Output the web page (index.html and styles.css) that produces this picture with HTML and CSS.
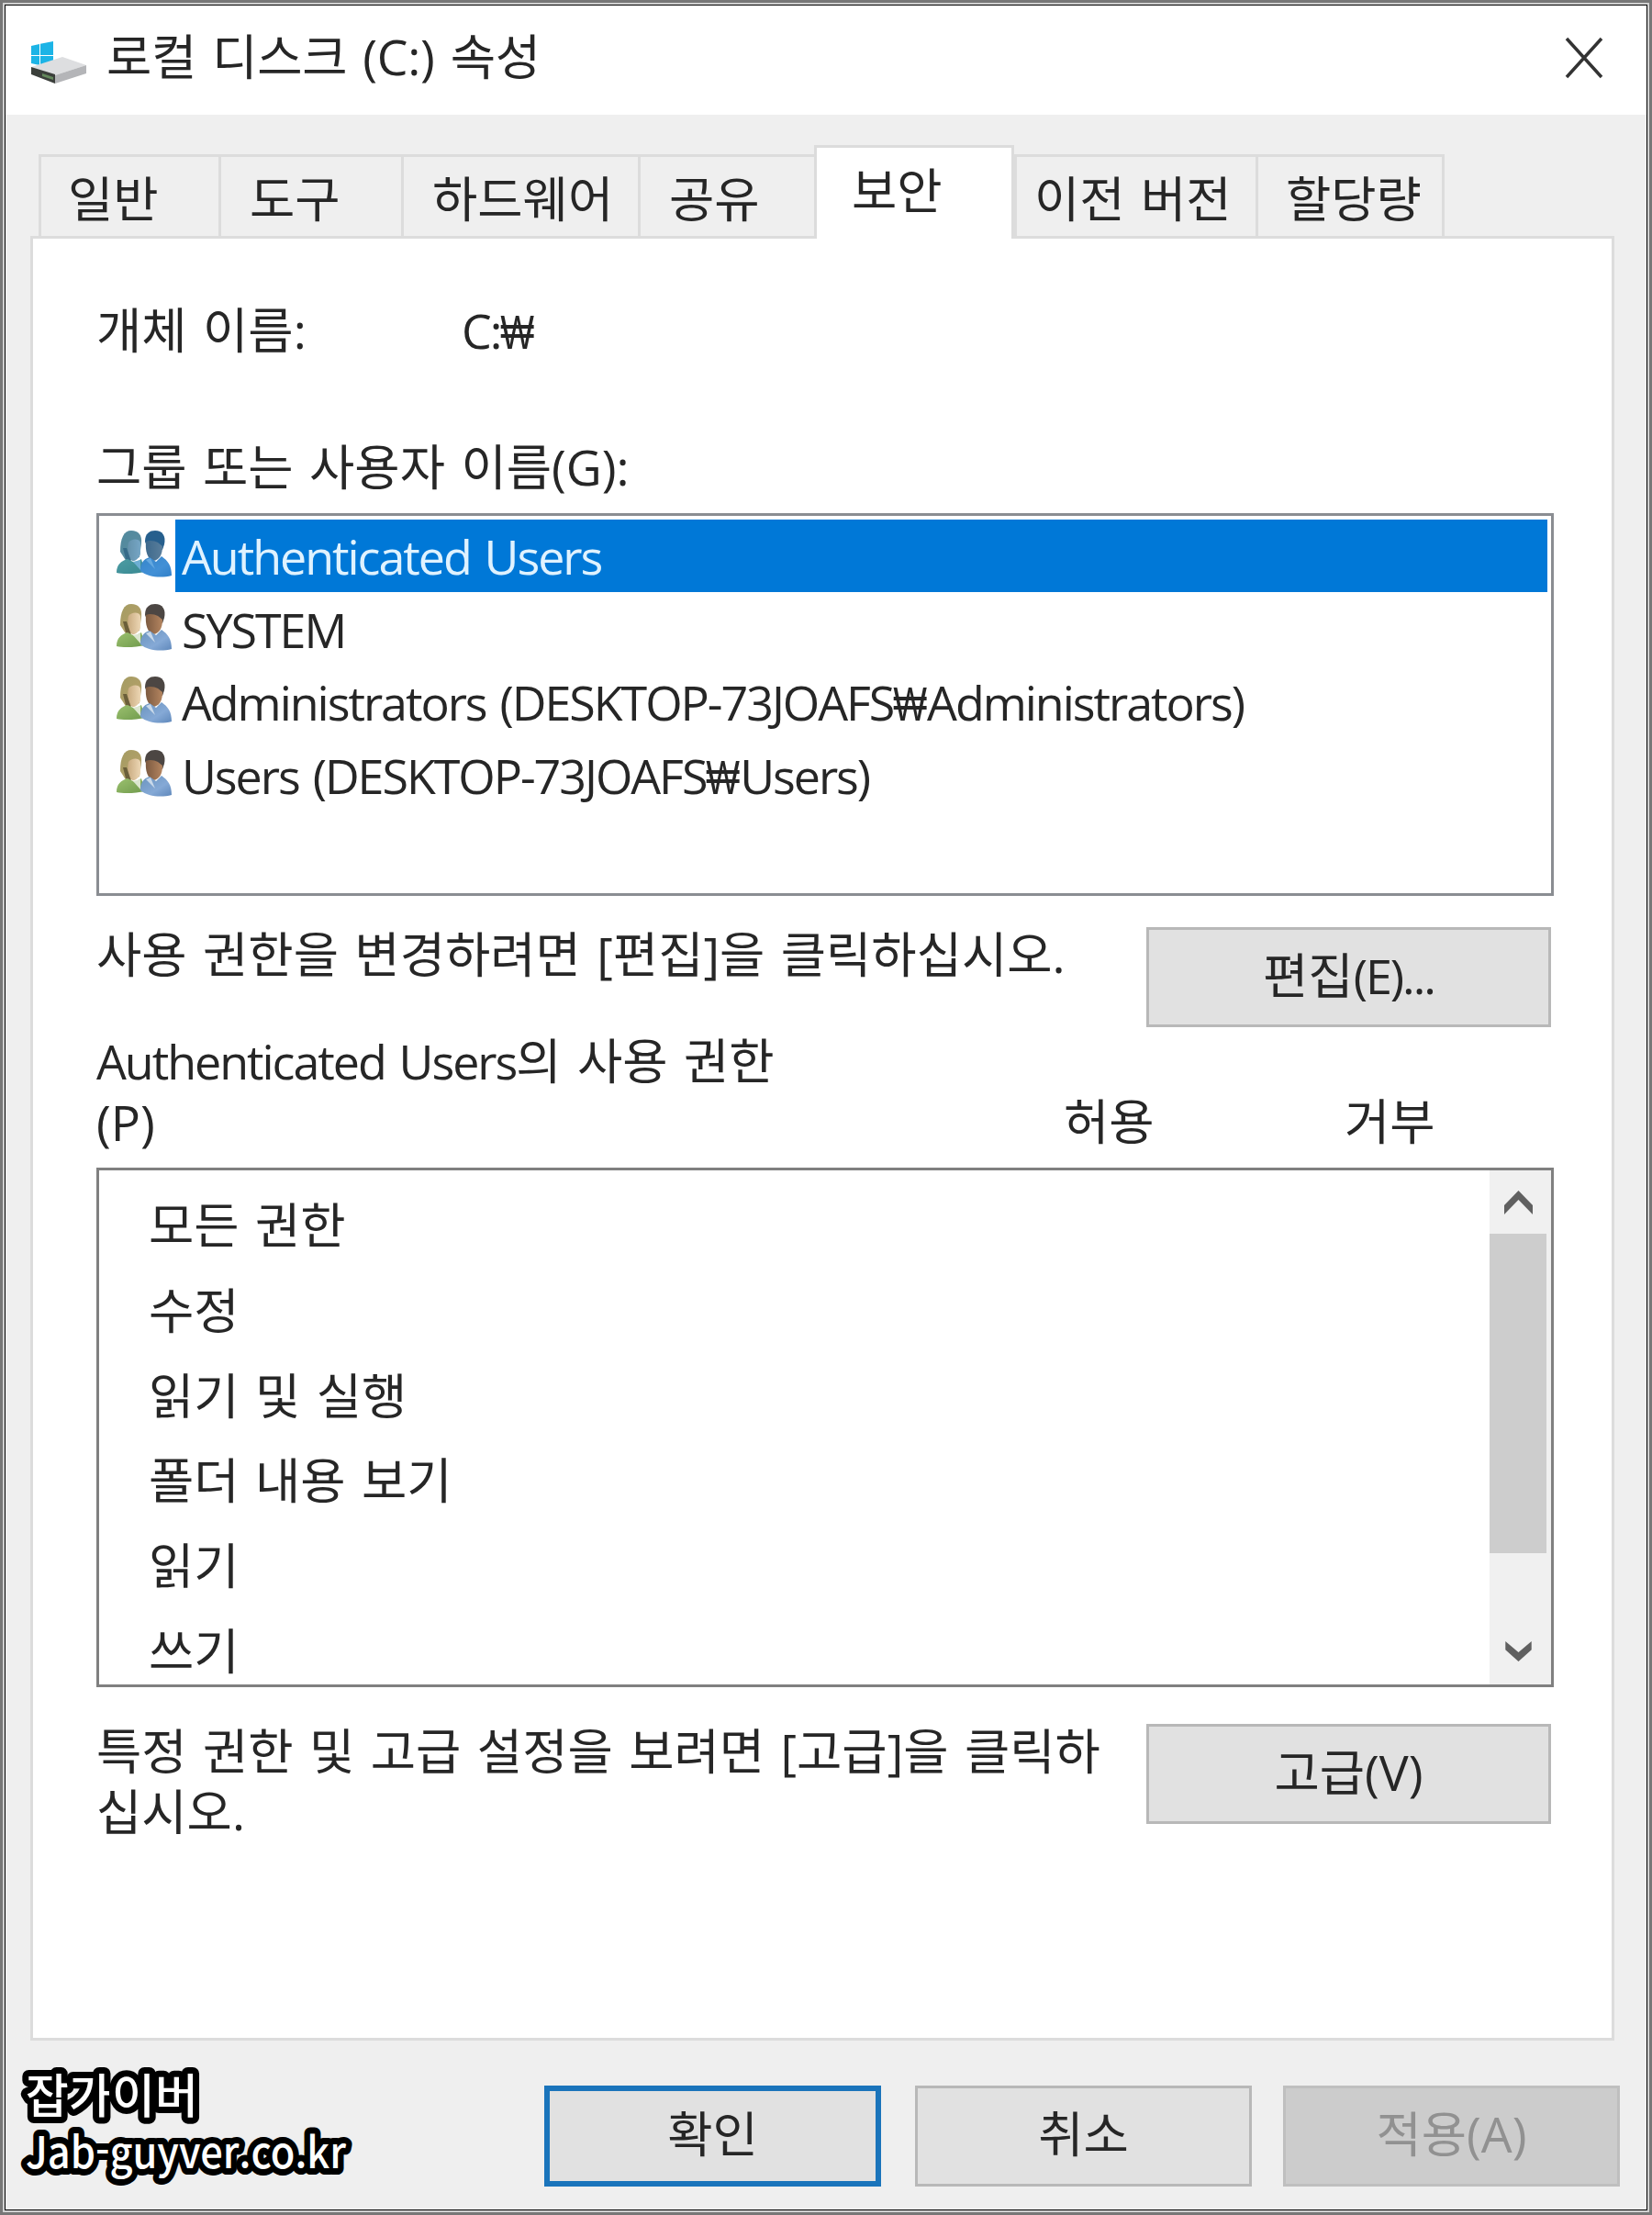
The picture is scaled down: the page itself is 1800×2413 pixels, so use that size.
FILE: index.html
```html
<!DOCTYPE html>
<html lang="ko">
<head>
    <meta charset="UTF-8">
    <meta name="viewport" content="width=device-width, initial-scale=1.0">
    <title>로컬 디스크 (C:) 속성</title>
    <link rel="stylesheet" href="styles.css">
</head>
<body>
    <svg width="0" height="0" class="defs">
        <defs>
            <linearGradient id="hair1" x1="0" y1="0" x2="1" y2="1"><stop offset="0" stop-color="#a39b62"/><stop offset="1" stop-color="#b9a26b"/></linearGradient>
            <linearGradient id="face1" x1="0" y1="0" x2="1" y2="0"><stop offset="0" stop-color="#c9ab80"/><stop offset="1" stop-color="#ecd6b4"/></linearGradient>
            <linearGradient id="face2" x1="0" y1="0" x2="1" y2="0"><stop offset="0" stop-color="#7c5a40"/><stop offset="1" stop-color="#b48560"/></linearGradient>
            <linearGradient id="body1" x1="0" y1="0" x2="1" y2="1"><stop offset="0" stop-color="#9cc16f"/><stop offset="1" stop-color="#6f9a4c"/></linearGradient>
            <linearGradient id="body2" x1="0" y1="0" x2="1" y2="1"><stop offset="0" stop-color="#6a93bd"/><stop offset="0.6" stop-color="#85a9d6"/><stop offset="1" stop-color="#5f88bb"/></linearGradient>
            <!-- blue tint for the icon of the selected row -->
            <filter id="tint" color-interpolation-filters="sRGB">
                <feFlood flood-color="#0078d7" flood-opacity="0.5"/>
                <feComposite in2="SourceGraphic" operator="atop"/>
            </filter>
            <g id="users">
                <path d="M4 24 C4 9 8 1 16 1 C24 1 28 6 27 15 L25 30 L11 35 Z" fill="url(#hair1)"/>
                <path d="M13 14 C16 10 24 9 26 14 L26 26 C25 31 20 35 17 34 C13 30 11 22 13 14 Z" fill="url(#face1)"/>
                <path d="M7 20 L11 20 L16 35 L10 32 Z" fill="#6b5f3a"/>
                <path d="M0 47 C0 38 5 34 12 32 L20 36 L27 32 L31 46 C22 48 8 49 0 47 Z" fill="url(#body1)"/>
                <path d="M18 35 L26 33 L26 44 Z" fill="#dbe6cf"/>
                <path d="M31 13 C31 4 36 1 42 1 C50 1 54 7 52 16 L50 22 L33 18 Z" fill="#4c4643"/>
                <path d="M32 13 C36 11 41 12 45 14 L50 18 C50 27 47 33 40 34 C34 32 31 24 32 13 Z" fill="url(#face2)"/>
                <path d="M26 45 C26 37 29 32 36 30 L43 35 L49 29 C56 34 60 39 60 50 C49 53 34 52 26 45 Z" fill="url(#body2)"/>
                <path d="M32 33 L37 31 L42 43 Z" fill="#c9d9ea"/>
            </g>
        </defs>
    </svg>

    <div class="dialog">
        <div class="titlebar">
            <svg class="drive-icon" viewBox="0 0 60 46">
                <path d="M0 5 L9 3 V15 H0 Z M10 2.800 L24 0 V15 H10 Z M0 16 H9 V26 L0 24 Z M10 16 H24 V28 L10 26 Z" fill="#1cb4e6"/>
                <path d="M0 28 L34 17 L60 26 L26 37 Z" fill="#dddee0"/>
                <path d="M26 37 L60 26 V35 L26 46 Z" fill="#b4b5b8"/>
                <path d="M0 28 L26 36 V46 L0 36 Z" fill="#3b3f3b"/>
                <path d="M12 35 L24 39 V42 L12 38 Z" fill="#64885c"/>
            </svg>
            <span class="title">로컬 디스크 (C:) 속성</span>
            <svg class="close-icon" viewBox="0 0 42 46"><path d="M2 2 L40 44 M40 2 L2 44" stroke="#333" stroke-width="3.500" fill="none"/></svg>
        </div>

        <div class="tabs">
            <div class="tab">일반</div>
            <div class="tab">도구</div>
            <div class="tab">하드웨어</div>
            <div class="tab">공유</div>
            <div class="tab active">보안</div>
            <div class="tab">이전 버전</div>
            <div class="tab">할당량</div>
        </div>

        <div class="panel">
            <div class="object-row">
                <span class="object-label">개체 이름:</span>
                <span class="latin">C:<span class="won">₩</span></span>
            </div>
            <div class="group-label">그룹 또는 사용자 이름(G):</div>
            <div class="group-list">
                <div class="group-item selected">
                    <svg class="users-icon" viewBox="0 0 60 52"><use href="#users" filter="url(#tint)"/></svg>
                    <span class="name"><span class="latin">Authenticated Users</span></span>
                </div>
                <div class="group-item">
                    <svg class="users-icon" viewBox="0 0 60 52"><use href="#users"/></svg>
                    <span class="name"><span class="latin">SYSTEM</span></span>
                </div>
                <div class="group-item">
                    <svg class="users-icon" viewBox="0 0 60 52"><use href="#users"/></svg>
                    <span class="name"><span class="latin">Administrators (DESKTOP-73JOAFS<span class="won">₩</span>Administrators)</span></span>
                </div>
                <div class="group-item">
                    <svg class="users-icon" viewBox="0 0 60 52"><use href="#users"/></svg>
                    <span class="name"><span class="latin">Users (DESKTOP-73JOAFS<span class="won">₩</span>Users)</span></span>
                </div>
            </div>

            <div class="hint-row">
                <div class="hint">사용 권한을 변경하려면 [편집]을 클릭하십시오.</div>
                <button type="button" class="btn">편집<span class="latin">(E)...</span></button>
            </div>

            <div class="perm-head">
                <div class="perm-label"><span class="latin">Authenticated Users</span>의 사용 권한<br>(P)</div>
                <div class="col-allow">허용</div>
                <div class="col-deny">거부</div>
            </div>
            <div class="perm-box">
                <div class="perm-list">
                    <div>모든 권한</div>
                    <div>수정</div>
                    <div>읽기 및 실행</div>
                    <div>폴더 내용 보기</div>
                    <div>읽기</div>
                    <div>쓰기</div>
                </div>
                <div class="scrollbar">
                    <svg class="arrow-up" viewBox="0 0 31 26"><path d="M0 16 L15.500 0 L31 16 V26 L15.500 10 L0 26 Z" fill="#606060"/></svg>
                    <div class="thumb"></div>
                    <svg class="arrow-down" viewBox="0 0 31 24"><path d="M0 0 L15.500 13 L31 0 V10 L15.500 24 L0 10 Z" fill="#606060"/></svg>
                </div>
            </div>

            <div class="hint-row advanced">
                <div class="hint">특정 권한 및 고급 설정을 보려면 [고급]을 클릭하<br>십시오.</div>
                <button type="button" class="btn">고급(V)</button>
            </div>
        </div>

        <div class="footer">
            <button type="button" class="btn default">확인</button>
            <button type="button" class="btn">취소</button>
            <button type="button" class="btn disabled" disabled>적용(A)</button>
        </div>

        <svg class="watermark" viewBox="0 0 400 185">
            <text class="mark-ko" x="22" y="82" textLength="188">잡가이버</text>
            <text class="mark-en" x="22" y="142" textLength="349" lengthAdjust="spacingAndGlyphs">Jab-guyver.co.kr</text>
        </svg>
    </div>
</body>
</html>
```
FILE: styles.css
```css
* {
    box-sizing: border-box;
}
body {
    margin: 0;
    padding: 5px;
    height: 2413px;
    overflow: hidden;
    background-color: #777;
    color: #262626;
    font-family: "Open Sans", "Noto Sans CJK KR", sans-serif;
    font-size: 53.6px;
    line-height: 66px;
    word-spacing: 3.5px;
    white-space: nowrap;
}
.defs {
    position: absolute;
}
.dialog {
    position: relative;
    width: 1790px;
    height: 2403px;
    border: 1px solid #000;
    box-shadow: 0 0 0 2px #d0d0d0;
    background-color: #efefef;
}
.titlebar {
    display: flex;
    align-items: center;
    height: 119px;
    padding: 0 47px 8px 28px;
    background-color: #fff;
}
.drive-icon {
    width: 60px;
    height: 46px;
    margin-top: 12px;
}
.title {
    flex: 1;
    margin-left: 22px;
    letter-spacing: -0.3px;
}
.close-icon {
    width: 42px;
    height: 46px;
    margin-top: 3px;
}

/* tabs */
.tabs {
    display: flex;
    align-items: flex-end;
    height: 98px;
    margin-top: 34px;
    padding-left: 36px;
}
.tab {
    width: 196px;
    height: 89px;
    padding: 13px 0 0 29px;
    border-top: 3px solid #dcdcdc;
    border-left: 3px solid #dcdcdc;
}
.tab:nth-child(2) {
    width: 199px;
    padding-left: 31px;
}
.tab:nth-child(3) {
    width: 258px;
    padding-left: 31px;
}
.tab:nth-child(4) {
    width: 192px;
    padding-left: 31px;
}
.tab:nth-child(6) {
    width: 263px;
    padding-left: 19px;
}
.tab:nth-child(7) {
    width: 206px;
    padding-left: 30px;
    border-right: 3px solid #dcdcdc;
}
.tab.active {
    position: relative;
    width: 218px;
    height: 102px;
    margin-bottom: -3px;
    padding: 14px 0 0 38px;
    border-right: 3px solid #dcdcdc;
    background-color: #fff;
}

/* security page */
.panel {
    width: 1726px;
    height: 1966px;
    margin-left: 27px;
    padding: 67px 64px 0 69px;
    border: 3px solid #dcdcdc;
    background-color: #fff;
}
.object-row {
    display: flex;
}
.object-label {
    width: 398px;
}
.group-label {
    margin-top: 83px;
}
.group-list {
    width: 1588px;
    height: 417px;
    margin-top: 17px;
    padding: 4px 4px 0 19px;
    border: 3px solid #8a8d92;
}
.group-item {
    display: flex;
    height: 79.600px;
}
.users-icon {
    width: 60px;
    height: 52px;
    margin-top: 11px;
}
.group-item .name {
    flex: 1;
    height: 79px;
    margin-left: 4px;
    padding: 7px 0 0 7px;
}
.group-item.selected .name {
    background-color: #0078d7;
    color: #dff2ff;
}
.latin {
    font-size: 52px;
    letter-spacing: -2.050px;
}
.won {
    display: inline-block;
    font-family: "Liberation Sans", sans-serif;
    font-size: 39px;
    line-height: 1;
    letter-spacing: 0;
    transform: scaleY(1.35);
    transform-origin: 50% 85%;
}
.hint-row {
    display: flex;
    justify-content: space-between;
    width: 1585px;
    margin-top: 34px;
}
.hint {
    margin-top: -3px;
}
.btn {
    width: 441px;
    height: 109px;
    padding: 0 0 4px;
    border: 3px solid #b8b8b8;
    background-color: #e1e1e1;
    color: #262626;
    font: inherit;
    word-spacing: inherit;
}
.perm-head {
    display: flex;
    margin-top: 3px;
    line-height: 67px;
}
.perm-label {
    flex: none;
    width: 1054px;
}
.col-allow, .col-deny {
    flex: none;
    width: 306px;
    padding-top: 67px;
    line-height: 66px;
}
.col-deny {
    width: 220px;
}
.perm-box {
    display: flex;
    justify-content: space-between;
    width: 1588px;
    height: 566px;
    margin-top: 16px;
    border: 3px solid #808080;
}
.perm-list {
    padding: 14px 0 0 54px;
    line-height: 92.800px;
}
.scrollbar {
    width: 67px;
    padding: 22px 5px 0 0;
    background-color: #f0f0f0;
}
.scrollbar svg {
    display: block;
    width: 31px;
    height: 22px;
    margin-left: 16px;
}
.scrollbar .arrow-up {
    height: 26px;
}
.thumb {
    height: 348px;
    margin: 21px 0 96px;
    background-color: #cdcdcd;
}
.advanced {
    margin-top: 40px;
}

/* bottom buttons */
.footer {
    display: flex;
    gap: 34px;
    margin: 49px 0 0 587px;
}
.footer .btn {
    width: 367px;
    height: 110px;
}
.footer .btn.default {
    margin-right: 3px;
    border: 6px solid #1a74bb;
}
.btn.disabled {
    border-color: #bfbfbf;
    background-color: #ccc;
    color: #919191;
}

/* site mark over the corner */
.watermark {
    position: absolute;
    left: 0;
    top: 2214px;
    width: 400px;
    height: 185px;
    overflow: visible;
    fill: #fff;
    stroke: #000;
    stroke-width: 14px;
    stroke-linejoin: round;
    paint-order: stroke fill;
    word-spacing: 0;
}
.mark-ko {
    font-size: 51px;
    font-weight: 500;
}
.mark-en {
    font-family: "Noto Sans CJK KR", sans-serif;
    font-size: 47px;
    font-weight: 500;
}
```
